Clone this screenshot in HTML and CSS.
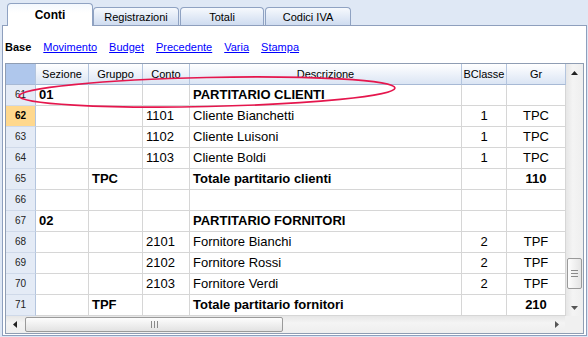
FILE: index.html
```html
<!DOCTYPE html>
<html lang="it">
  <head>
    <meta charset="UTF-8" />
    <title>Conti</title>
    <link rel="stylesheet" href="styles.css">
  </head>
  <body>
    <div class="tabs">
      <div class="tab tab-active">Conti</div>
      <div class="tab tab-reg">Registrazioni</div>
      <div class="tab tab-tot">Totali</div>
      <div class="tab tab-iva">Codici IVA</div>
    </div>

    <div class="panel">
      <div class="views">
        <b>Base</b>
        <a href="#">Movimento</a>
        <a href="#">Budget</a>
        <a href="#">Precedente</a>
        <a href="#">Varia</a>
        <a href="#">Stampa</a>
      </div>

      <div class="grid-frame">
        <div class="grid-main">
          <div class="grid">
            <div class="hd corner"></div>
            <div class="hd">Sezione</div>
            <div class="hd">Gruppo</div>
            <div class="hd">Conto</div>
            <div class="hd">Descrizione</div>
            <div class="hd">BClasse</div>
            <div class="hd">Gr</div>

            <div class="rn">61</div>
            <div class="c b">01</div><div class="c"></div><div class="c"></div>
            <div class="c b">PARTITARIO CLIENTI</div><div class="c"></div><div class="c"></div>

            <div class="rn sel">62</div>
            <div class="c"></div><div class="c"></div><div class="c">1101</div>
            <div class="c">Cliente Bianchetti</div><div class="c mid">1</div><div class="c mid">TPC</div>

            <div class="rn">63</div>
            <div class="c"></div><div class="c"></div><div class="c">1102</div>
            <div class="c">Cliente Luisoni</div><div class="c mid">1</div><div class="c mid">TPC</div>

            <div class="rn">64</div>
            <div class="c"></div><div class="c"></div><div class="c">1103</div>
            <div class="c">Cliente Boldi</div><div class="c mid">1</div><div class="c mid">TPC</div>

            <div class="rn">65</div>
            <div class="c"></div><div class="c b">TPC</div><div class="c"></div>
            <div class="c b">Totale partitario clienti</div><div class="c"></div><div class="c mid b">110</div>

            <div class="rn">66</div>
            <div class="c"></div><div class="c"></div><div class="c"></div>
            <div class="c"></div><div class="c"></div><div class="c"></div>

            <div class="rn">67</div>
            <div class="c b">02</div><div class="c"></div><div class="c"></div>
            <div class="c b">PARTITARIO FORNITORI</div><div class="c"></div><div class="c"></div>

            <div class="rn">68</div>
            <div class="c"></div><div class="c"></div><div class="c">2101</div>
            <div class="c">Fornitore Bianchi</div><div class="c mid">2</div><div class="c mid">TPF</div>

            <div class="rn">69</div>
            <div class="c"></div><div class="c"></div><div class="c">2102</div>
            <div class="c">Fornitore Rossi</div><div class="c mid">2</div><div class="c mid">TPF</div>

            <div class="rn">70</div>
            <div class="c"></div><div class="c"></div><div class="c">2103</div>
            <div class="c">Fornitore Verdi</div><div class="c mid">2</div><div class="c mid">TPF</div>

            <div class="rn">71</div>
            <div class="c"></div><div class="c b">TPF</div><div class="c"></div>
            <div class="c b">Totale partitario fornitori</div><div class="c"></div><div class="c mid b">210</div>
          </div>

          <div class="vscroll">
            <div class="sb-btn">
              <svg width="7" height="4" viewBox="0 0 7 4"><path d="M0 4 L3.5 0 L7 4 Z" fill="#222"/></svg>
            </div>
            <div class="sb-track">
              <div class="thumb vthumb"><span class="grip-h"></span><span class="grip-h"></span><span class="grip-h"></span></div>
            </div>
            <div class="sb-btn">
              <svg width="7" height="4" viewBox="0 0 7 4"><path d="M0 0 L7 0 L3.5 4 Z" fill="#555"/></svg>
            </div>
          </div>
        </div>

        <div class="hscroll-row">
          <div class="hscroll">
            <div class="sb-btn">
              <svg width="4" height="7" viewBox="0 0 4 7"><path d="M4 0 L4 7 L0 3.5 Z" fill="#222"/></svg>
            </div>
            <div class="sb-track htrack">
              <div class="thumb hthumb"><span class="grip-v"></span><span class="grip-v"></span><span class="grip-v"></span></div>
            </div>
            <div class="sb-btn">
              <svg width="4" height="7" viewBox="0 0 4 7"><path d="M0 0 L4 3.5 L0 7 Z" fill="#555"/></svg>
            </div>
          </div>
          <div class="sb-corner"></div>
        </div>
      </div>
    </div>

    <!-- hand drawn highlight round row 61 -->
    <svg class="mark" width="588" height="337" viewBox="0 0 588 337">
      <ellipse cx="207" cy="92" rx="188" ry="14.5" transform="rotate(-1.2 207 92)" fill="none" stroke="#e5164d" stroke-width="1.7"/>
    </svg>
  </body>
</html>
```

FILE: styles.css
```css
html,
body {
  margin: 0;
  padding: 0;
}
body {
  background: #dfe8f5;
  font-family: "Liberation Sans", Arial, sans-serif;
  font-size: 11px;
  color: #000;
  width: 588px;
  height: 337px;
  overflow: hidden;
}

/* tabs */
.tabs {
  display: flex;
  align-items: flex-end;
  height: 25px;
  padding-left: 7px;
}
.tab {
  box-sizing: border-box;
  height: 18px;
  border: 1px solid #8fa2c2;
  border-bottom: 0;
  border-radius: 4px 4px 0 0;
  background: linear-gradient(#f6f9fd, #cfdcf0);
  text-align: center;
  line-height: 18px;
}
.tab-active {
  position: relative;
  z-index: 1;
  width: 86px;
  height: 23px;
  margin-bottom: -1px;
  background: linear-gradient(#f4f8fd, #ffffff 40%);
  font-weight: bold;
  font-size: 12px;
  line-height: 22px;
}
.tab-reg {
  width: 86px;
}
.tab-tot {
  width: 84px;
  margin-left: 1px;
}
.tab-iva {
  width: 86px;
  margin-left: 1px;
}

/* panel */
.panel {
  box-sizing: border-box;
  width: 585px;
  height: 311px;
  margin-left: 2px;
  border: 1px solid #8e9fbd;
  background: #fff;
}
.views {
  box-sizing: border-box;
  height: 37px;
  padding: 15px 0 0 2px;
  display: flex;
  gap: 12px;
  line-height: 13px;
}
.views a {
  color: #0000ff;
  text-decoration: underline;
}

/* grid */
.grid-frame {
  box-sizing: border-box;
  width: 579px;
  margin-left: 2px;
  border: 1px solid #8f9db3;
}
.grid-main {
  display: flex;
}
.grid {
  display: grid;
  grid-template-columns: 30px 53px 54px 47px 272px 45px 59px;
  grid-auto-rows: 21px;
  width: 560px;
}
.grid > div {
  box-sizing: border-box;
  border-right: 1px solid #d6d6d6;
  border-bottom: 1px solid #d6d6d6;
  white-space: nowrap;
  overflow: hidden;
}
.grid .hd {
  background: linear-gradient(#ffffff, #dbe5f4);
  border-right-color: #b4c5de;
  border-bottom-color: #a7b9d5;
  text-align: center;
  line-height: 20px;
}
.grid .corner {
  background: #afc7ec;
}
.grid .rn {
  background: #e4ebf6;
  border-right-color: #b4c5de;
  border-bottom-color: #cfd9e9;
  text-align: center;
  font-size: 10px;
  line-height: 20px;
  color: #222;
}
.grid .rn.sel {
  background: #ffd88d;
  font-weight: bold;
  color: #000;
}
.grid .c {
  padding: 0 3px;
  font-size: 13px;
  line-height: 20px;
}
.grid .b {
  font-weight: bold;
}
.grid .mid {
  text-align: center;
}

/* scrollbars */
.vscroll {
  width: 17px;
  height: 252px;
  display: flex;
  flex-direction: column;
  background: linear-gradient(90deg, #e6e6e6, #f4f4f4 40%, #eeeeee);
}
.sb-btn {
  width: 17px;
  height: 17px;
  flex: none;
  display: flex;
  align-items: center;
  justify-content: center;
}
.sb-track {
  flex: 1;
}
.thumb {
  box-sizing: border-box;
  border: 1px solid #9a9a9a;
  border-radius: 2px;
  background: linear-gradient(90deg, #fdfdfd, #e4e4e4);
  display: flex;
  align-items: center;
  justify-content: center;
}
.vthumb {
  width: 15px;
  height: 31px;
  margin: 177px 0 0 1px;
  flex-direction: column;
  gap: 2px;
}
.grip-h {
  display: block;
  width: 7px;
  height: 1px;
  background: #8a8a8a;
}
.hscroll-row {
  display: flex;
}
.hscroll {
  width: 559px;
  height: 17px;
  display: flex;
  background: linear-gradient(#e6e6e6, #f4f4f4 40%, #eeeeee);
}
.htrack {
  display: flex;
  align-items: center;
}
.hthumb {
  width: 258px;
  height: 15px;
  margin-left: 2px;
  background: linear-gradient(#fdfdfd, #e2e2e2);
  gap: 2px;
}
.grip-v {
  display: block;
  width: 1px;
  height: 7px;
  background: #8a8a8a;
}
.sb-corner {
  width: 18px;
  height: 17px;
  background: #f0f0f0;
}

/* highlight */
.mark {
  position: absolute;
  left: 0;
  top: 0;
  pointer-events: none;
}
```
